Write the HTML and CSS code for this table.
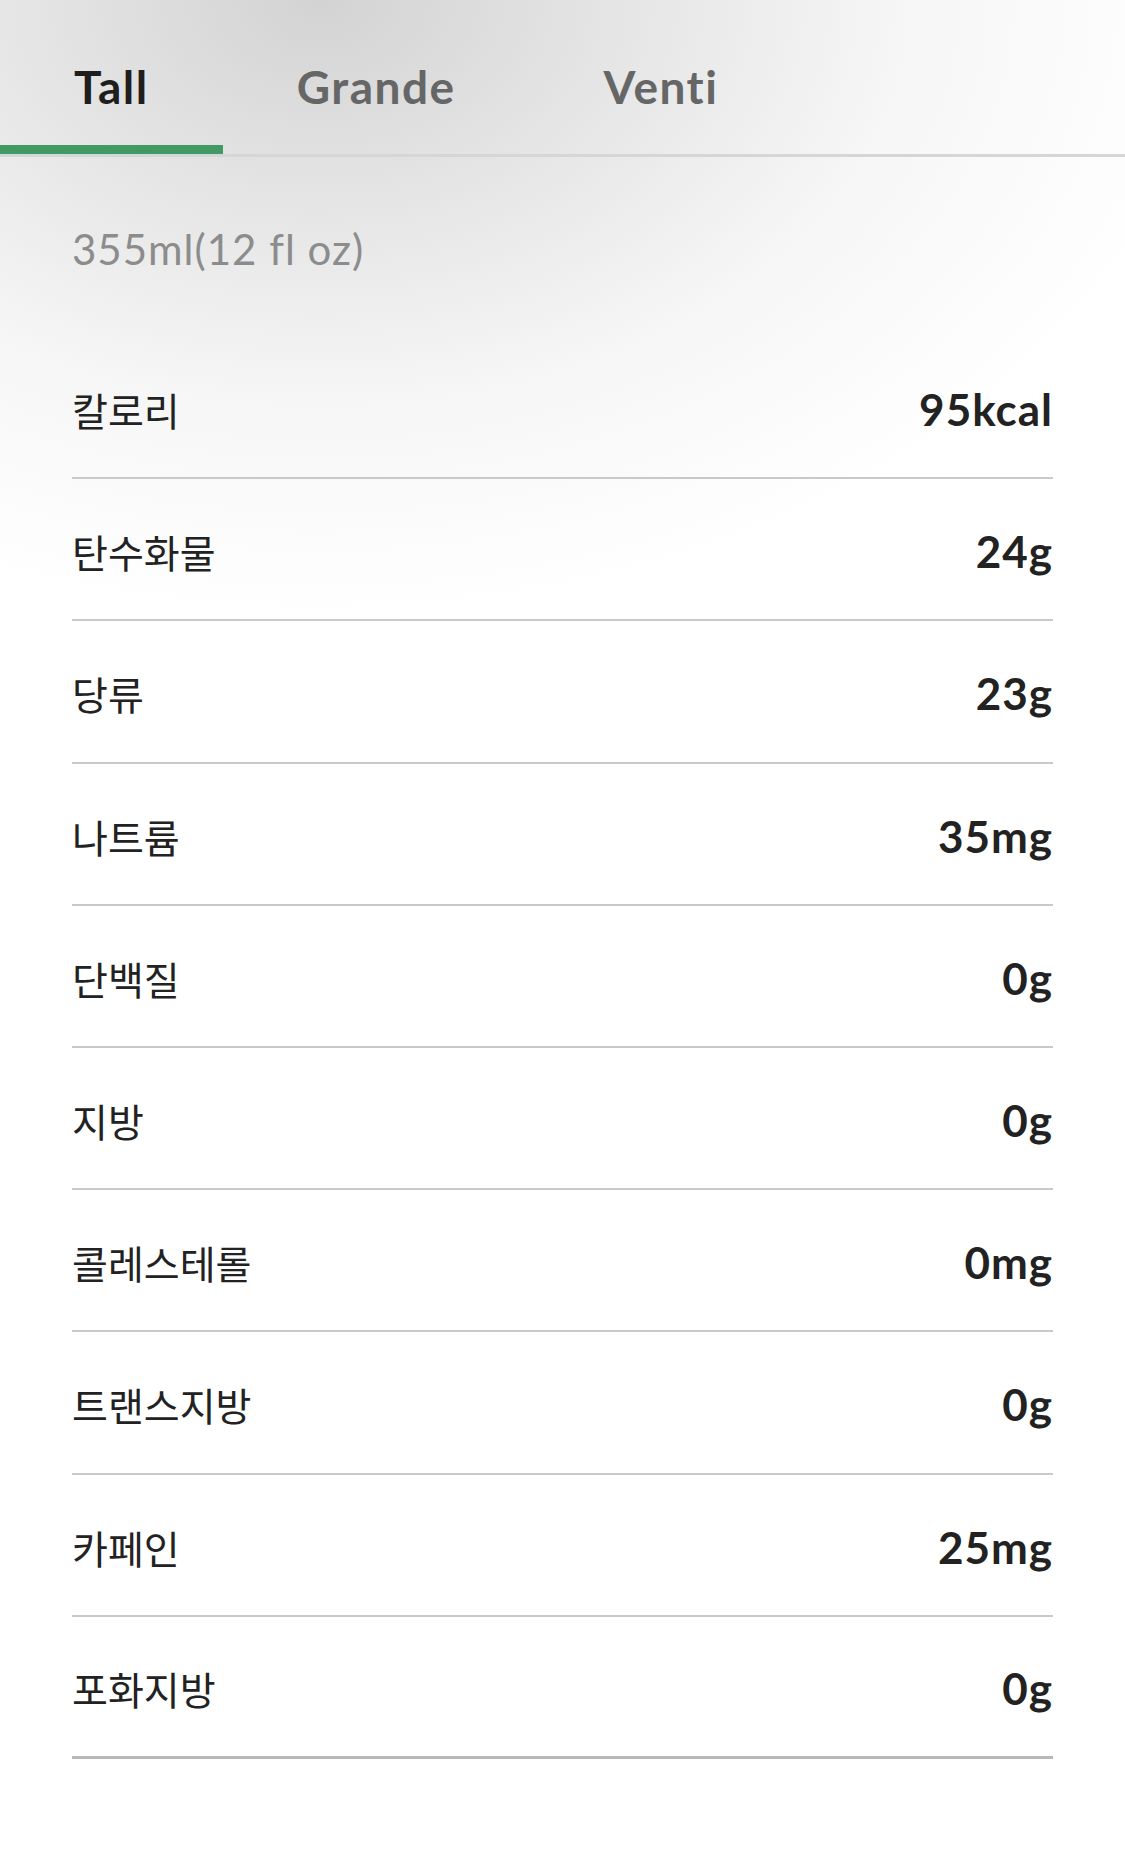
FILE: index.html
```html
<!DOCTYPE html>
<html lang="ko">
<head>
    <meta charset="UTF-8">
    <title>영양 정보</title>
    <link rel="stylesheet" href="styles.css">
</head>
<body>
    <div class="size-tabs">
        <div class="size-tab active">Tall</div>
        <div class="size-tab">Grande</div>
        <div class="size-tab">Venti</div>
    </div>

    <div class="nutrition">
        <div class="volume">355ml(12 fl oz)</div>

        <div class="nutrition-list">
            <div class="nutrition-row">
                <span class="label">칼로리</span>
                <span class="value">95kcal</span>
            </div>
            <div class="nutrition-row">
                <span class="label">탄수화물</span>
                <span class="value">24g</span>
            </div>
            <div class="nutrition-row">
                <span class="label">당류</span>
                <span class="value">23g</span>
            </div>
            <div class="nutrition-row">
                <span class="label">나트륨</span>
                <span class="value">35mg</span>
            </div>
            <div class="nutrition-row">
                <span class="label">단백질</span>
                <span class="value">0g</span>
            </div>
            <div class="nutrition-row">
                <span class="label">지방</span>
                <span class="value">0g</span>
            </div>
            <div class="nutrition-row">
                <span class="label">콜레스테롤</span>
                <span class="value">0mg</span>
            </div>
            <div class="nutrition-row">
                <span class="label">트랜스지방</span>
                <span class="value">0g</span>
            </div>
            <div class="nutrition-row">
                <span class="label">카페인</span>
                <span class="value">25mg</span>
            </div>
            <div class="nutrition-row last">
                <span class="label">포화지방</span>
                <span class="value">0g</span>
            </div>
        </div>
    </div>
</body>
</html>
```

FILE: styles.css
```css
body {
    margin: 0;
    min-height: 1849px;
    font-family: Lato, "Noto Sans CJK KR", sans-serif;
    font-variant-ligatures: none;
    color: #222;
    background-color: #fff;
    background-image: radial-gradient(ellipse 900px 620px at 320px 0, #d3d3d3 0%, #e6e6e6 35%, #f6f6f6 65%, #fff 100%);
    background-repeat: no-repeat;
}

/* Size tabs */
.size-tabs {
    display: flex;
    border-bottom: 3px solid #d6d6d6;
}

.size-tab {
    padding: 59px 74px 30px;
    font-size: 46px;
    line-height: 56px;
    font-weight: 700;
    letter-spacing: 1.5px;
    color: #666;
    border-bottom: 9px solid transparent;
}

.size-tab.active {
    color: #1e1e1e;
    border-bottom-color: #419a63;
}

/* Nutrition table */
.nutrition {
    padding: 0 72px;
}

.volume {
    padding-top: 68px;
    height: 112px;
    font-size: 42px;
    line-height: 48px;
    letter-spacing: 1px;
    color: #8c8c8c;
}

.nutrition-row {
    box-sizing: border-box;
    height: 142.2px;
    display: flex;
    align-items: center;
    justify-content: space-between;
    border-bottom: 2px solid #c9c9c9;
    padding-top: 4px;
}

.nutrition-row.last {
    border-bottom: 3px solid #b8b8b8;
}

.label {
    font-family: "Noto Sans CJK KR", sans-serif;
    font-size: 39px;
    color: #222;
}

.value {
    font-size: 44px;
    font-weight: 700;
    letter-spacing: 1px;
    color: #222;
}
```
